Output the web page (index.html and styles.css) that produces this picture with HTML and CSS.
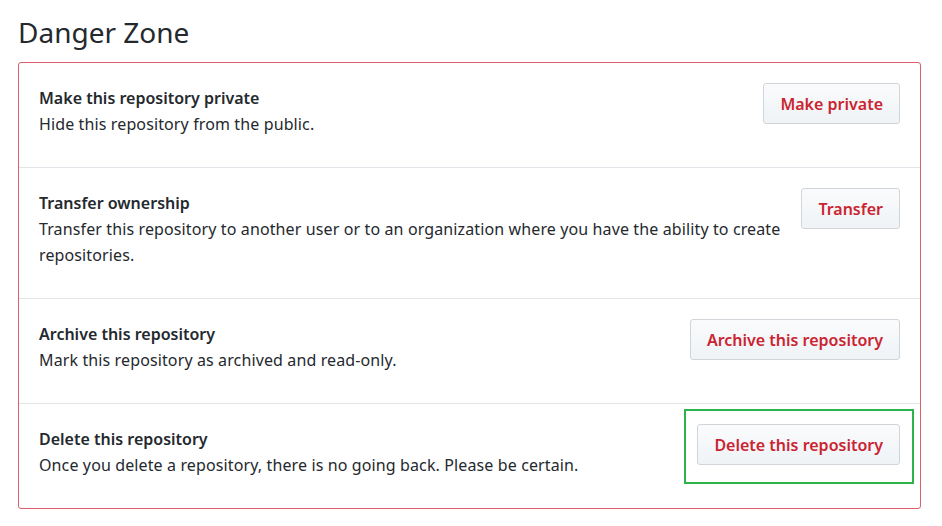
FILE: index.html
```html
<!DOCTYPE html>
<html>
<head>
<meta charset="utf-8">
<link rel="stylesheet" href="styles.css">
</head>
<body>
<div class="page">
  <h2 class="heading">Danger Zone</h2>
  <div class="box">
    <div class="row">
      <div class="info">
        <div class="title">Make this repository private</div>
        <p class="desc">Hide this repository from the public.</p>
      </div>
      <button class="btn">Make private</button>
    </div>
    <div class="row">
      <div class="info">
        <div class="title">Transfer ownership</div>
        <p class="desc">Transfer this repository to another user or to an organization where you have the ability to create repositories.</p>
      </div>
      <button class="btn">Transfer</button>
    </div>
    <div class="row">
      <div class="info">
        <div class="title">Archive this repository</div>
        <p class="desc">Mark this repository as archived and read-only.</p>
      </div>
      <button class="btn">Archive this repository</button>
    </div>
    <div class="row">
      <div class="info">
        <div class="title">Delete this repository</div>
        <p class="desc">Once you delete a repository, there is no going back. Please be certain.</p>
      </div>
      <div class="highlight-wrap">
        <button class="btn">Delete this repository</button>
        <span class="highlight"></span>
      </div>
    </div>
  </div>
</div>
</body>
</html>
```
FILE: styles.css
```css
* { box-sizing: border-box; }
html, body { margin: 0; padding: 0; background: #fff; }
body {
  font-family: "Noto Sans", "Open Sans", sans-serif;
  color: #24292e;
}
.page {
  padding: 11px 21px 0 18px;
}
.heading {
  margin: 0 0 9px 0;
  font-size: 28px;
  font-weight: 400;
  line-height: 42px;
  color: #24292e;
}
.box {
  border: 1px solid #dc5f6b;
  border-radius: 3px;
}
.row {
  display: flex;
  align-items: flex-start;
  justify-content: space-between;
  gap: 20px;
  padding: 20px 20px 30px 20px;
  border-top: 1px solid #e1e4e8;
}
.row:first-child { border-top: none; }
.info { flex: 1; padding-top: 2px; }
.title {
  font-size: 16px;
  font-weight: 600;
  line-height: 26px;
}
.desc {
  margin: 0;
  font-size: 16px;
  letter-spacing: 0.12px;
  line-height: 26px;
}
.btn {
  flex: none;
  font-family: inherit;
  font-size: 16px;
  font-weight: 600;
  color: #cb2431;
  background: linear-gradient(#fafbfc, #eff3f6);
  border: 1px solid #d1d5da;
  border-radius: 3px;
  height: 41px;
  padding: 0 16px;
  cursor: pointer;
}
.highlight-wrap {
  position: relative;
  flex: none;
}
.highlight-wrap .btn { display: block; }
.highlight {
  position: absolute;
  top: -15px;
  left: -13px;
  right: -14px;
  bottom: -19px;
  border: 2px solid #2db34a;
  pointer-events: none;
}
```
